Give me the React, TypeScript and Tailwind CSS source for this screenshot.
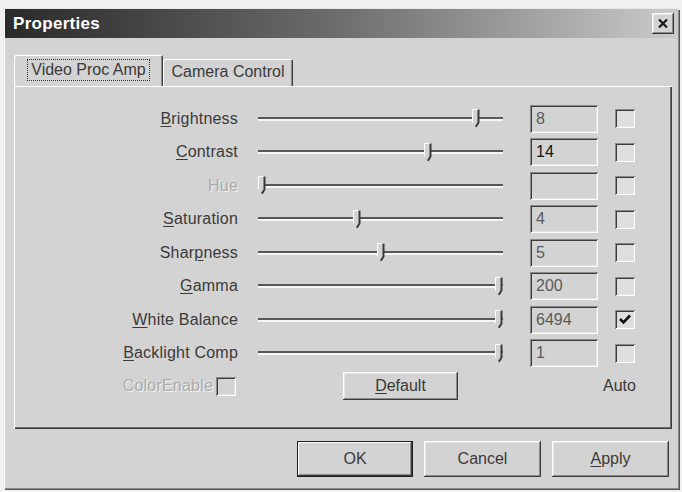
import React from "react";

const raised =
  "shadow-[inset_-1px_-1px_#3c3c3c,inset_1px_1px_#ffffff,inset_-2px_-2px_#8a8a8a,inset_2px_2px_#e6e6e6]";
const sunken =
  "shadow-[inset_1px_1px_#8a8a8a,inset_-1px_-1px_#ffffff,inset_2px_2px_#3c3c3c,inset_-2px_-2px_#e2e2e2]";

type Row = {
  label: string;
  ul: number;
  disabled?: boolean;
  pos: number;
  value: string;
  dark?: boolean;
  checked?: boolean;
};

const rows: Row[] = [
  { label: "Brightness", ul: 0, pos: 214, value: "8" },
  { label: "Contrast", ul: 0, pos: 166, value: "14", dark: true },
  { label: "Hue", ul: -1, disabled: true, pos: 0, value: "" },
  { label: "Saturation", ul: 0, pos: 95, value: "4" },
  { label: "Sharpness", ul: 4, pos: 119, value: "5" },
  { label: "Gamma", ul: 0, pos: 237, value: "200" },
  { label: "White Balance", ul: 0, pos: 237, value: "6494", checked: true },
  { label: "Backlight Comp", ul: 0, pos: 237, value: "1" },
];

function Label({ text, ul }: { text: string; ul: number }) {
  if (ul < 0) return <>{text}</>;
  return (
    <>
      {text.slice(0, ul)}
      <span className="underline underline-offset-2">{text[ul]}</span>
      {text.slice(ul + 1)}
    </>
  );
}

function Thumb() {
  return (
    <svg width="8" height="19" viewBox="0 0 8 19">
      <path d="M0.5 0.5 H7 V13.5 L4 18 L0.5 13.5 Z" fill="#d3d3d3" />
      <path d="M0.5 13.5 V0.5 H6.5" stroke="#ffffff" fill="none" strokeWidth="1" />
      <path d="M6.5 0.5 V13.5 L3.8 17.8" stroke="#3a3a3a" fill="none" strokeWidth="2" />
    </svg>
  );
}

function Checkbox({ checked, disabled }: { checked?: boolean; disabled?: boolean }) {
  return (
    <div
      className={`w-[20px] h-[19px] ${sunken} ${disabled ? "bg-[#d3d3d3]" : "bg-[#dedede]"} flex items-center justify-center`}
    >
      {checked && (
        <svg width="12" height="11" viewBox="0 0 12 11">
          <path d="M1 5 L4.5 8.5 L11 1.5" stroke="#111" strokeWidth="2.6" fill="none" />
        </svg>
      )}
    </div>
  );
}

function Btn({ children, def, w, h }: { children: React.ReactNode; def?: boolean; w: string; h: string }) {
  return (
    <div
      className={`${w} ${h} flex items-center justify-center text-[16px] text-[#3a3a3a] bg-[#d3d3d3] ${
        def
          ? "border border-[#1e1e1e] shadow-[inset_-1px_-1px_#3c3c3c,inset_1px_1px_#ffffff,inset_-2px_-2px_#8a8a8a]"
          : raised
      }`}
    >
      {children}
    </div>
  );
}

export default function App() {
  return (
    <div className="w-[682px] h-[492px] bg-[#f1f1f1] pt-[8px] pl-[3px] font-['Liberation_Sans',Arial,sans-serif] overflow-hidden">
      <div className="w-[677px] h-[482px] bg-[#d3d3d3] pt-[1px] px-[2px] shadow-[inset_1px_1px_#e8e8e8,inset_2px_2px_#ffffff,inset_-1px_-1px_#555555,inset_-2px_-2px_#8a8a8a] flex flex-col">
        {/* Title bar */}
        <div className="h-[29px] flex items-center justify-between pl-[8px] pr-[4px] bg-gradient-to-r from-[#2a2a2a] via-[#6e6e6e] to-[#cbcbcb]">
          <span className="text-white font-bold text-[17px] tracking-[0.3px]">Properties</span>
          <div className={`w-[22px] h-[21px] bg-[#d3d3d3] ${raised} flex items-center justify-center`}>
            <svg width="10" height="9" viewBox="0 0 10 9">
              <path d="M1 0.5 L9 8.5 M9 0.5 L1 8.5" stroke="#1a1a1a" strokeWidth="2.2" />
            </svg>
          </div>
        </div>

        {/* Tabs */}
        <div className="flex items-end ml-[9px] mt-[17px] h-[31px] text-[16px] text-[#3a3a3a]">
          <div className="relative z-10 w-[149px] h-[31px] bg-[#d3d3d3] rounded-t-[2px] shadow-[inset_1px_1px_#ffffff,inset_-1px_0_#3c3c3c,inset_-2px_0_#8a8a8a] flex items-start justify-center pt-[5px]">
            <span className="px-[3px] leading-[20px] outline outline-1 outline-dotted outline-[#333]">Video Proc Amp</span>
          </div>
          <div className="w-[130px] h-[27px] bg-[#d3d3d3] rounded-t-[2px] shadow-[inset_1px_1px_#ffffff,inset_-1px_0_#3c3c3c,inset_-2px_0_#8a8a8a] flex items-center justify-center pb-[1px]">
            Camera Control
          </div>
        </div>

        {/* Panel */}
        <div className="ml-[9px] w-[658px] h-[343px] bg-[#d3d3d3] shadow-[inset_1px_1px_#ffffff,inset_-1px_-1px_#3c3c3c,inset_-2px_-2px_#6e6e6e] pt-[16px] text-[16px] text-[#3a3a3a]">
          {rows.map((r) => (
            <div key={r.label} className="h-[33.5px] flex items-center">
              <div
                className={`w-[224px] text-right tracking-[0.2px] ${
                  r.disabled ? "text-[#a9a9a9] [text-shadow:1px_1px_0_#f4f4f4]" : ""
                }`}
              >
                <Label text={r.label} ul={r.ul} />
              </div>
              <div className="ml-[20px] w-[245px] h-[19px] relative flex items-center">
                <div className="w-full h-[4px] border-t-[2px] border-t-[#575757] border-b-[2px] border-b-[#f6f6f6]" />
                <div className="absolute top-0" style={{ left: r.pos }}>
                  <Thumb />
                </div>
              </div>
              <div
                className={`ml-[27px] w-[68px] h-[28px] ${sunken} flex items-center pl-[6px] ${
                  r.dark ? "text-[#141414]" : "text-[#5a5a5a]"
                }`}
              >
                {r.value}
              </div>
              <div className="ml-[17px]">
                <Checkbox checked={r.checked} />
              </div>
            </div>
          ))}
          <div className="h-[32px] flex items-center">
            <div className="w-[222px] flex items-center justify-end gap-[3px]">
              <span className="text-[#ababab] [text-shadow:1px_1px_0_#f4f4f4] tracking-[0.2px]">ColorEnable</span>
              <Checkbox disabled />
            </div>
            <div className="ml-[107px]">
              <Btn w="w-[115px]" h="h-[28px]">
                <Label text="Default" ul={0} />
              </Btn>
            </div>
            <span className="ml-[145px]">Auto</span>
          </div>
        </div>

        {/* Bottom buttons */}
        <div className="mt-[12px] pl-[292px] flex gap-[11px]">
          <Btn def w="w-[116px]" h="h-[36px]">
            OK
          </Btn>
          <Btn w="w-[117px]" h="h-[36px]">
            Cancel
          </Btn>
          <Btn w="w-[117px]" h="h-[36px]">
            <Label text="Apply" ul={0} />
          </Btn>
        </div>
      </div>
    </div>
  );
}
